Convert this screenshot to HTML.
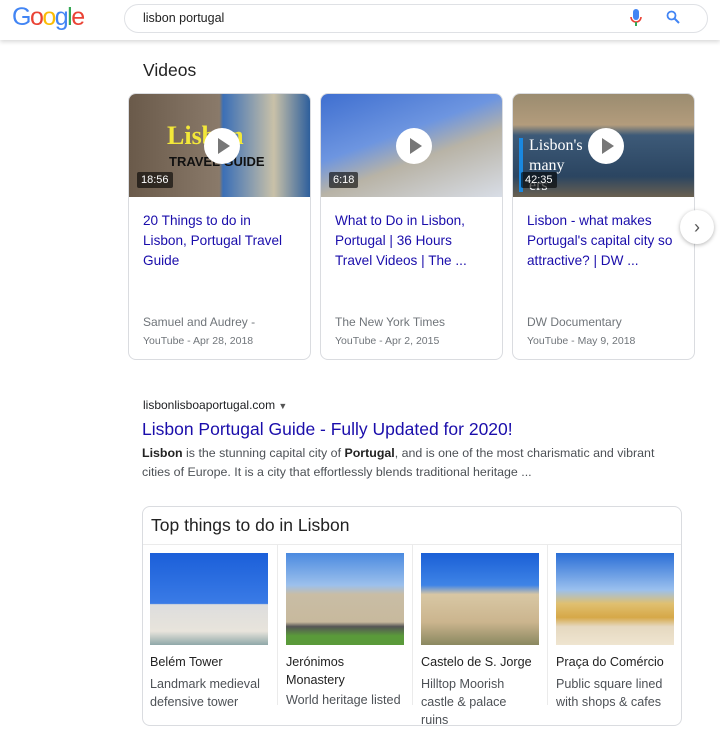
<!DOCTYPE html>
<html><head><meta charset="utf-8"><style>
body{margin:0;width:720px;height:699px;overflow:hidden;background:#fff;font-family:"Liberation Sans",Arial,sans-serif;position:relative}
.a{position:absolute}
.hdr{left:0;top:0;width:720px;height:40px;background:#fff;box-shadow:0 2px 4px rgba(0,0,0,.15)}
.logo{left:12px;top:3px;font-size:25px;letter-spacing:-1.5px}
.sb{left:124px;top:4px;width:584px;height:29px;border:1px solid #dfe1e5;border-radius:15px;box-sizing:border-box}
.card{width:183px;height:267px;border:1px solid #dadce0;border-radius:8px;box-sizing:border-box;overflow:hidden;top:93px}
.th{position:absolute;left:0;top:0;width:100%;height:103px}
.play{position:absolute;left:75px;top:34px;width:36px;height:36px;border-radius:50%;background:#fff}
.play:after{content:"";position:absolute;left:14px;top:10px;border-left:12px solid #777;border-top:8px solid transparent;border-bottom:8px solid transparent}
.dur{position:absolute;left:8px;top:78px;background:rgba(0,0,0,.6);color:#fff;font-size:11px;padding:2px 4px;border-radius:2px}
.vt{position:absolute;left:14px;top:117px;width:152px;font-size:13.6px;line-height:20px;color:#1a0dab}
.ch{position:absolute;left:14px;top:221px;font-size:12px;color:#70757a}
.mt{position:absolute;left:14px;top:241px;font-size:10.5px;color:#70757a}
.col{top:545px;width:135px;height:160px;border-left:1px solid #ebebeb;box-sizing:border-box}
.col .img{position:absolute;left:8px;top:8px;width:118px;height:92px}
.col .n{position:absolute;left:8px;top:108px;font-size:12.6px;color:#222;line-height:18px;width:120px}
.col .d{position:absolute;left:8px;top:130px;font-size:12.6px;color:#4d5156;line-height:18px;width:120px}
</style></head><body>
<div class="a hdr"></div>
<div class="a logo"><span style="color:#4285f4">G</span><span style="color:#ea4335">o</span><span style="color:#fbbc05">o</span><span style="color:#4285f4">g</span><span style="color:#34a853">l</span><span style="color:#ea4335">e</span></div>
<div class="a sb"></div>
<div class="a" style="left:143px;top:11px;font-size:12.5px;color:#222">lisbon portugal</div>
<svg class="a" style="left:629px;top:9px" width="14" height="18" viewBox="0 0 14 18"><rect x="4" y="0" width="6" height="11" rx="3" fill="#4285f4"/><path d="M2 8a5 5 0 0 0 10 0" stroke="#ea4335" stroke-width="1.6" fill="none"/><rect x="6" y="13" width="2" height="4" fill="#34a853"/></svg>
<svg class="a" style="left:666px;top:10px" width="14" height="14" viewBox="0 0 14 14"><circle cx="5.5" cy="5.5" r="4" stroke="#4285f4" stroke-width="1.8" fill="none"/><path d="M8.5 8.5L13 13" stroke="#4285f4" stroke-width="2"/></svg>

<div class="a" style="left:143px;top:60px;font-size:17.5px;color:#222">Videos</div>

<div class="a card" style="left:128px">
<div class="th" style="background:linear-gradient(90deg,#6a5a4a 0,#8a7a6a 50%,#3b6fb6 52%,#c9c1a8 80%,#2e5f9c 100%)"></div>
<div class="a" style="left:38px;top:27px;font:bold 26px 'Liberation Serif',serif;color:#f3e839">Lisbon</div>
<div class="a" style="left:40px;top:60px;font:bold 13px 'Liberation Sans';color:#111">TRAVEL GUIDE</div>
<div class="play"></div><div class="dur">18:56</div>
<div class="vt">20 Things to do in Lisbon, Portugal Travel Guide</div>
<div class="ch">Samuel and Audrey -</div><div class="mt">YouTube - Apr 28, 2018</div></div>

<div class="a card" style="left:320px">
<div class="th" style="background:linear-gradient(160deg,#3f6fd0 0,#6d95e0 40%,#b8b3a6 60%,#d8dde6 100%)"></div>
<div class="play"></div><div class="dur">6:18</div>
<div class="vt">What to Do in Lisbon, Portugal | 36 Hours Travel Videos | The ...</div>
<div class="ch">The New York Times</div><div class="mt">YouTube - Apr 2, 2015</div></div>

<div class="a card" style="left:512px">
<div class="th" style="background:linear-gradient(180deg,#9b8c70 0,#b39c7c 30%,#3d5a78 40%,#2b4561 80%,#6a6050 100%)"></div>
<div class="a" style="left:6px;top:44px;width:4px;height:54px;background:#1a88e0"></div>
<div class="a" style="left:16px;top:42px;font:16px 'Liberation Serif',serif;color:#fff;line-height:20px">Lisbon's<br>many<br>ers</div>
<div class="play"></div><div class="dur">42:35</div>
<div class="vt">Lisbon - what makes Portugal's capital city so attractive? | DW ...</div>
<div class="ch">DW Documentary</div><div class="mt">YouTube - May 9, 2018</div></div>

<div class="a" style="left:680px;top:210px;width:34px;height:34px;border-radius:50%;background:#fff;box-shadow:0 1px 4px rgba(0,0,0,.3);text-align:center;line-height:34px;color:#555;font-size:18px">›</div>

<div class="a" style="left:143px;top:398px;font-size:12px;color:#202124">lisbonlisboaportugal.com <span style="font-size:9px;color:#555">▼</span></div>
<div class="a" style="left:142px;top:419px;font-size:17.5px;color:#1a0dab">Lisbon Portugal Guide - Fully Updated for 2020!</div>
<div class="a" style="left:142px;top:444px;width:540px;font-size:12.4px;line-height:19px;color:#4d5156"><b style="color:#222">Lisbon</b> is the stunning capital city of <b style="color:#222">Portugal</b>, and is one of the most charismatic and vibrant cities of Europe. It is a city that effortlessly blends traditional heritage ...</div>

<div class="a" style="left:142px;top:506px;width:540px;height:220px;border:1px solid #dadce0;border-radius:8px;box-sizing:border-box"></div>
<div class="a" style="left:151px;top:515px;font-size:17.5px;color:#222">Top things to do in Lisbon</div>
<div class="a" style="left:143px;top:544px;width:538px;height:1px;background:#ebebeb"></div>
<div class="a col" style="left:142px;border-left:none"><div class="img" style="background:linear-gradient(180deg,#1b5fd9 0,#3a7be6 55%,#ddd 56%,#e8e4dc 85%,#8fa8a8 100%)"></div><div class="n">Belém Tower</div><div class="d">Landmark medieval defensive tower</div></div>
<div class="a col" style="left:277px"><div class="img" style="background:linear-gradient(180deg,#4b8ae0 0,#9cc0ec 35%,#c9bda5 45%,#c7b99d 75%,#555 80%,#5a9a3a 90%)"></div><div class="n" style="width:100px">Jerónimos Monastery</div><div class="d" style="top:146px">World heritage listed</div></div>
<div class="a col" style="left:412px"><div class="img" style="background:linear-gradient(180deg,#1a5fd6 0,#3f84e6 35%,#d8c7a4 45%,#cbb58e 75%,#8a8860 100%)"></div><div class="n">Castelo de S. Jorge</div><div class="d" style="width:110px">Hilltop Moorish castle &amp; palace ruins</div></div>
<div class="a col" style="left:547px"><div class="img" style="background:linear-gradient(180deg,#2a6ed6 0,#9ac0ee 40%,#e0c070 55%,#d6a848 70%,#e5d8c0 80%,#efe5d0 100%)"></div><div class="n">Praça do Comércio</div><div class="d" style="width:110px">Public square lined with shops &amp; cafes</div></div>
</body></html>
